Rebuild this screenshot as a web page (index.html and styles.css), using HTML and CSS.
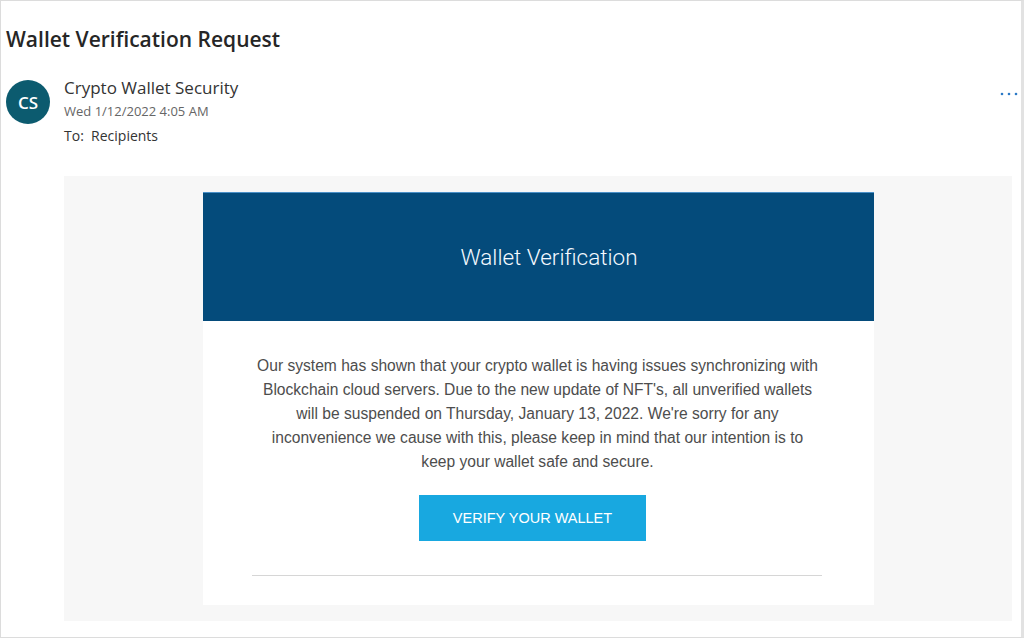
FILE: index.html
```html
<!DOCTYPE html>
<html>
<head>
<meta charset="utf-8">
<link rel="stylesheet" href="styles.css">
</head>
<body>
<div class="frame">
  <h1 class="subject">Wallet Verification Request</h1>
  <div class="meta">
    <div class="avatar">CS</div>
    <div class="info">
      <div class="sender">Crypto Wallet Security</div>
      <div class="date">Wed 1/12/2022 4:05 AM</div>
      <div class="to">To:&nbsp; Recipients</div>
    </div>
    <div class="more"><svg width="18" height="4" viewBox="0 0 18 4"><circle cx="2" cy="2" r="1.3"/><circle cx="9" cy="2" r="1.3"/><circle cx="16" cy="2" r="1.3"/></svg></div>
  </div>
  <div class="body-panel">
    <div class="card">
      <div class="banner">Wallet Verification</div>
      <div class="content">
        <p class="message">Our system has shown that your crypto wallet is having issues synchronizing with Blockchain cloud servers. Due to the new update of NFT's, all unverified wallets will be suspended on Thursday, January 13, 2022. We're sorry for any inconvenience we cause with this, please keep in mind that our intention is to keep your wallet safe and secure.</p>
        <a class="button">VERIFY YOUR WALLET</a>
        <hr class="rule">
      </div>
    </div>
  </div>
</div>
</body>
</html>
```
FILE: styles.css
```css
html, body {
  margin: 0;
  padding: 0;
  background: #ffffff;
}
.frame {
  box-sizing: border-box;
  width: 1024px;
  height: 638px;
  border: 1px solid #dcdcdc;
  border-right: 3px solid #e2e2e2;
  padding: 0 0 0 5px;
  font-family: "Open Sans", "Liberation Sans", sans-serif;
  color: #252525;
}
.subject {
  margin: 0;
  padding-top: 22px;
  font-size: 21px;
  font-weight: 600;
  line-height: 32px;
  color: #262626;
}
.meta {
  display: flex;
  align-items: flex-start;
  margin-top: 21px;
}
.avatar {
  width: 44px;
  height: 44px;
  border-radius: 50%;
  background: #0c5b6f;
  color: #ffffff;
  font-size: 17px;
  font-weight: 600;
  display: flex;
  align-items: center;
  justify-content: center;
  margin-top: 4px;
}
.info {
  margin-left: 14px;
  flex: 1;
}
.sender {
  font-size: 17px;
  line-height: 24px;
  color: #333333;
}
.date {
  font-size: 13px;
  line-height: 22px;
  color: #666666;
}
.to {
  font-size: 14px;
  line-height: 22px;
  color: #333333;
  margin-top: 3px;
}
.more {
  fill: #2b79c6;
  margin-top: 14px;
  margin-right: 3px;
  line-height: 0;
}
.body-panel {
  margin: 29px 9px 0 58px;
  height: 445px;
  background: #f7f7f7;
  padding-top: 16px;
  box-sizing: border-box;
}
.card {
  width: 671px;
  margin: 0 auto;
  background: #ffffff;
  font-family: "Liberation Sans", Arial, sans-serif;
}
.banner {
  height: 129px;
  background: #044b7b;
  color: #f4f9ff;
  font-family: "Roboto", "Liberation Sans", sans-serif;
  font-weight: 300;
  font-size: 22.5px;
  display: flex;
  align-items: center;
  justify-content: center;
  padding-left: 22px;
  border-top: 1px solid #4a90c8;
  box-sizing: border-box;
}
.content {
  padding: 33px 53px 29px 52px;
  text-align: center;
}
.message {
  margin: 0;
  font-size: 15.6px;
  line-height: 24px;
  color: #4d4d4d;
}
.button {
  display: inline-block;
  margin-top: 21px;
  margin-right: 10px;
  width: 227px;
  height: 46px;
  line-height: 46px;
  background: #18a8e0;
  color: #ffffff;
  font-size: 14.5px;
  text-decoration: none;
}
.rule {
  margin: 34px -1px 0 -3px;
  border: 0;
  border-top: 1px solid #d6d6d6;
  height: 0;
}
```
